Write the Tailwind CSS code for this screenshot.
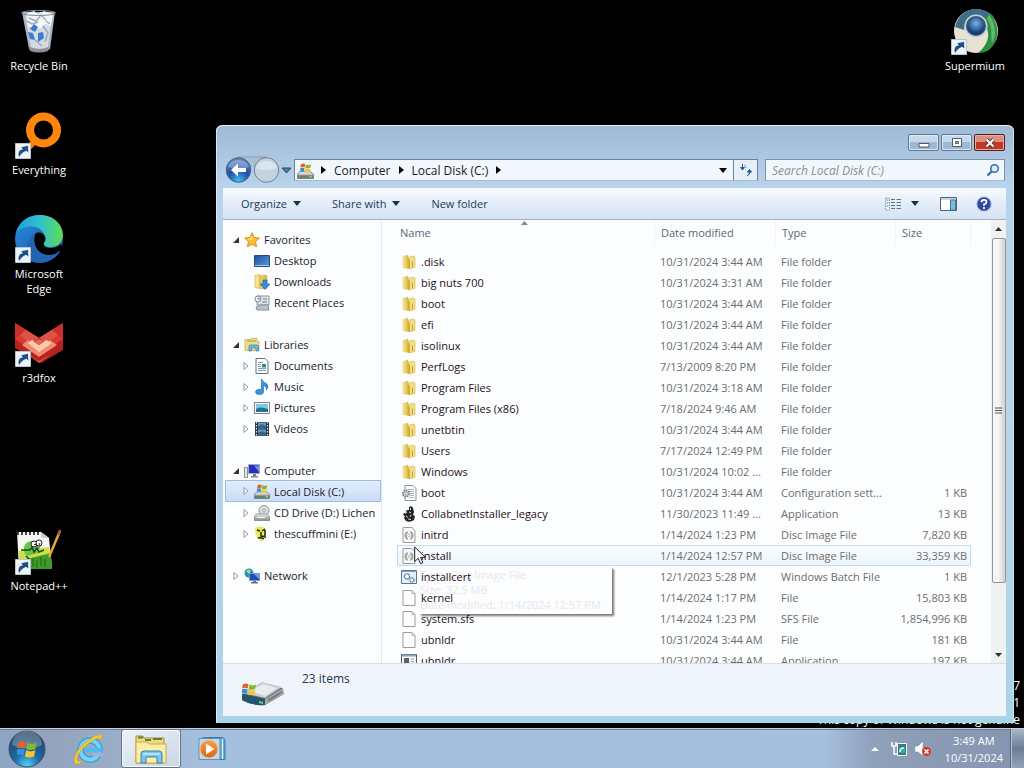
<!DOCTYPE html>
<html lang="en">
<head>
    <meta charset="UTF-8">
    <meta name="viewport" content="width=device-width, initial-scale=1.0">
    <title>Local Disk (C:)</title>
    <script src="https://cdn.jsdelivr.net/npm/@tailwindcss/browser@4"></script>
</head>
<body class="h-screen flex flex-col overflow-hidden bg-black font-['Open_Sans','Noto_Sans',sans-serif] text-[11px] leading-[15px] text-[#1a1a2a] cursor-default">

    <!-- Icon sprite (zero size, since gradients are lost under display: none) -->
    <svg class="absolute size-0" xmlns="http://www.w3.org/2000/svg">
        <defs>
            <linearGradient id="gFolder" x1="0" x2="1"><stop offset="0" stop-color="#f9eda0"/><stop offset=".5" stop-color="#ecd265"/><stop offset="1" stop-color="#d9b93f"/></linearGradient>
            <linearGradient id="gGrey" x1="0" x2="0" y1="0" y2="1"><stop offset="0" stop-color="#eef0f1"/><stop offset="1" stop-color="#85898c"/></linearGradient>
            <linearGradient id="gBlue" x1="0" x2="1" y1="0" y2="1"><stop offset="0" stop-color="#1b4fa0"/><stop offset="1" stop-color="#5b9be0"/></linearGradient>
            <linearGradient id="gEdgeTop" x1="0" x2="1"><stop offset="0" stop-color="#1e9fd8"/><stop offset=".5" stop-color="#2fc0cf"/><stop offset="1" stop-color="#5fdc52"/></linearGradient>
            <linearGradient id="gEdgeLow" x1="0" x2="1" y1="0" y2="1"><stop offset="0" stop-color="#2a8ede"/><stop offset="1" stop-color="#14509c"/></linearGradient>
            <radialGradient id="gOrb" cx=".5" cy=".95" r=".9"><stop offset="0" stop-color="#4fd4f4"/><stop offset=".4" stop-color="#1c6ba8"/><stop offset="1" stop-color="#23415f"/></radialGradient>
            <radialGradient id="gBack" cx=".5" cy=".95" r=".9"><stop offset="0" stop-color="#48c3f2"/><stop offset=".5" stop-color="#1b4fa5"/><stop offset="1" stop-color="#5e85c0"/></radialGradient>
            <radialGradient id="gEye" cx=".5" cy=".35" r=".6"><stop offset="0" stop-color="#7ab4e6"/><stop offset="1" stop-color="#0d3570"/></radialGradient>
            <linearGradient id="gPlay" x1="0" x2="0" y1="0" y2="1"><stop offset="0" stop-color="#f7a04c"/><stop offset="1" stop-color="#dd6312"/></linearGradient>
        </defs>

        <symbol id="flag" viewBox="0 0 16 16">
            <path d="M1 3q3-2 6 0L6 7.500q-3-1.500-6 0z" fill="#e2622b"/>
            <path d="M8 3.300q3 1.700 7 0L14 8q-4 1.500-7 0z" fill="#86b82c"/>
            <path d="M0 8.500q3-1.500 6 0L5 13q-3-1.500-6 0z" fill="#3a8fd6"/>
            <path d="M7 9q3 1.700 7 0l-1 4.700q-4 1.500-7 0z" fill="#f7c531"/>
        </symbol>
        <symbol id="shortcut" viewBox="0 0 16 16">
            <path d="M.5.500h15v15H.500z" fill="#eef3f8" stroke="#b9c4d0"/>
            <path d="M4 14C2.500 9 5 6.500 8 6.300L6.300 4.200 13 2.800l.3 6.600-2.100-1.600C8 9 6.300 10.500 4 14z" fill="#1d4f8c"/>
        </symbol>
        <symbol id="folder" viewBox="0 0 16 16">
            <path d="M2 2.500 7 1v13.500l-5-1z" fill="url(#gFolder)" stroke="#d8c060" stroke-width=".5"/>
            <path d="M7 3.500 12 2l2 1v10.500L8 15z" fill="#f2df84" stroke="#c9a93a" stroke-width=".5"/>
            <path d="M7 4 9 6v9l-2-.5z" fill="#d0ae3c"/>
            <path d="M11.500 7.500v5.500" stroke="#c49d2c"/>
        </symbol>
        <symbol id="file" viewBox="0 0 16 16">
            <path d="M2 .5h9L14 3.500v12H2z" fill="#fdfdfd" stroke="#9c9c9c"/>
            <path d="M11 .5v3h3" fill="none" stroke="#b5b5b5"/>
        </symbol>
        <symbol id="disc" viewBox="0 0 16 16">
            <path d="M2 .5h9L14 3.500v12H2z" fill="#f8f8f8" stroke="#9c9c9c"/>
            <circle cx="8" cy="8.500" r="3.500" fill="none" stroke="#9a9fa1" stroke-width="2"/>
            <path d="M8 4v3M8 10v3.500" stroke="#f8f8f8" stroke-width="2.500"/>
            <circle cx="8" cy="8.500" r="1.200" fill="#fff" stroke="#a0a0a0" stroke-width=".7"/>
        </symbol>
        <symbol id="config" viewBox="0 0 16 16">
            <path d="M4 .5h8L15 3.500v12H4z" fill="#fafafa" stroke="#8f959a"/>
            <path d="M7 4.500h6M7 6.500h6M9 8.500h4M9 10.500h4M8 12.500h5" stroke="#a9b4be"/>
            <circle cx="5" cy="8.500" r="3.300" fill="#c2cad0" stroke="#6c7880" stroke-width="1.500" stroke-dasharray="1.500 1"/>
            <circle cx="5" cy="8.500" r="1.200" fill="#fff" stroke="#6c7880" stroke-width=".5"/>
        </symbol>
        <symbol id="java" viewBox="0 0 16 16">
            <path d="M8 1q3-2 4 1l1 4-1 3 2 1-1 4q-4 3-8 1l-2-3 1-2-2-1 1-2 2 .5L6 6 4.500 4.500 8 4z" fill="#222426"/>
            <path d="M9.500 2v2M8 6l2 1M5 10l2 1.500M10 9l-1 2M7 13l3 .5" stroke="#d9dcdd" fill="none"/>
        </symbol>
        <symbol id="batch" viewBox="0 0 16 16">
            <path d="M.5 1.500h15v13H.500z" fill="#e4eef7" stroke="#54789b"/>
            <path d="M1 2.500h14" stroke="#7ca4c9"/>
            <circle cx="6" cy="7.500" r="2.600" fill="#fff" stroke="#53718d" stroke-width="1.300" stroke-dasharray="1.600 .6"/>
            <circle cx="11" cy="11" r="2.100" fill="#fff" stroke="#53718d" stroke-width="1.200" stroke-dasharray="1.300 .5"/>
        </symbol>
        <symbol id="app" viewBox="0 0 16 16">
            <path d="M.5 1.500h15v13H.500z" fill="#f6f8f9" stroke="#54626c"/>
            <path d="M1 2.500h14" stroke="#8ba4b5" stroke-width="2"/>
            <path d="M3 5h5v7H3z" fill="#4b6373"/>
            <path d="M10 6h3M10 8.500h3M10 11h3" stroke="#8f9ba3"/>
        </symbol>
        <symbol id="star" viewBox="0 0 16 16">
            <path d="m8 .7 2.200 4.800 5.200.6-3.900 3.500 1.100 5.200L8 12.200l-4.600 2.600 1.100-5.200L.6 6.100l5.200-.6z" fill="#fbc02f" stroke="#db8f25"/>
            <path d="M8 3 6.500 6.500 3 7l5 1z" fill="#fde89b"/>
        </symbol>
        <symbol id="desktop" viewBox="0 0 16 16">
            <path d="M.5 2.500h15v11H.500z" fill="url(#gBlue)" stroke="#2a4a74"/>
            <path d="M1 12.500h14" stroke="#a9c8ea"/>
        </symbol>
        <symbol id="downloads" viewBox="0 0 16 16">
            <path d="M1 1.500 6 .5v14l-5-1zM6 2l5-1 2 1v12l-6 1z" fill="url(#gFolder)" stroke="#cda93c" stroke-width=".6"/>
            <path d="M9 6h4v4h3l-5 5.500L6 10h3z" fill="#3590d8" stroke="#1d5d9c" stroke-width=".6"/>
        </symbol>
        <symbol id="recent" viewBox="0 0 16 16">
            <path d="M3 1h12v9H3z" fill="#dfe5e9" stroke="#87929a"/>
            <path d="M2 12q4-3 12-2l1 5H3z" fill="#bac4cb" stroke="#87929a"/>
            <circle cx="4" cy="4" r="3" fill="#eef3f5" stroke="#7d8c96"/>
            <path d="M4 2.500V4h2M9 4h4M8 7h5" stroke="#6a7780" fill="none"/>
        </symbol>
        <symbol id="libraries" viewBox="0 0 16 16">
            <path d="M1 2.500h5l1-1h6v3h2v9H1z" fill="#f2dd86" stroke="#c7a848" stroke-width=".7"/>
            <path d="M3 4h9" stroke="#77a357"/>
            <path d="M5 14V9.500Q5 8 6.500 8H13q1.500 0 1.500 1.500V14H12v-3H7.500v3z" fill="#6dbbe5" stroke="#3379ac" stroke-width=".7"/>
        </symbol>
        <symbol id="documents" viewBox="0 0 16 16">
            <path d="M2 .5h9L14 3.500v12H2z" fill="#fff" stroke="#64727d"/>
            <path d="M4 4.500h5M4 6.500h3M4 8.500h3M4 10.500h8M4 12.500h8" stroke="#7d9bb3"/>
            <path d="M8 6h4v3.500H8z" fill="#348c7e"/>
        </symbol>
        <symbol id="music" viewBox="0 0 16 16">
            <path d="M7.500 0Q9 3.500 13 5q2 3-.5 6 .5-3.500-3-4.500V13q0 2.500-4 2.500T1.500 13t4-2.700l2 .3z" fill="#3298dd" stroke="#1b64a9" stroke-width=".6"/>
        </symbol>
        <symbol id="pictures" viewBox="0 0 16 16">
            <path d="M.5 2.500h15v11H.500z" fill="#fff" stroke="#75838e"/>
            <path d="M2 4h12v8H2z" fill="#7cc5ed"/>
            <path d="M2 9q4-3 12 0v3H2z" fill="#28708c"/>
        </symbol>
        <symbol id="videos" viewBox="0 0 16 16">
            <path d="M1 1h14v14H1z" fill="#27323a"/>
            <path d="M4 1.500h8v6H4zM4 8.500h8v6H4z" fill="#5b9ccc"/>
            <path d="M4 5l4-2 4 2v2.500H4zM4 12l4-2 4 2v2.500H4z" fill="#356489"/>
            <path d="M2.500 1v14M13.500 1v14" stroke="#e1e6ea" stroke-width="1.200" stroke-dasharray="1.500 1.500"/>
        </symbol>
        <symbol id="computer" viewBox="0 0 16 16">
            <path d="M.5 4.500h3v10h-3z" fill="#e5e8e9" stroke="#878d91"/>
            <path d="M4.500 1.500h11v9h-11z" fill="#2230c4" stroke="#a3abb3"/>
            <path d="M10 2.500h5V9z" fill="#708be9"/>
            <path d="M9 11h3v2h2v1.500H7V13h2z" fill="#7d868d"/>
        </symbol>
        <symbol id="drive" viewBox="0 0 16 16">
            <path d="M2.500 9h10l3 2.500v4H.500v-4z" fill="url(#gGrey)" stroke="#5f6a68" stroke-width=".7"/>
            <path d="M1 12.500h14v2.500H1z" fill="#6c7f72"/>
            <path d="M11.500 13.800h2.500" stroke="#7dde5c" stroke-width="1.500"/>
            <use href="#flag" x="3" y="0" width="11" height="11"/>
        </symbol>
        <symbol id="cd" viewBox="0 0 16 16">
            <circle cx="10" cy="5.500" r="5" fill="#dde0e1" stroke="#8e9497"/>
            <circle cx="10" cy="5.500" r="1.500" fill="#fff" stroke="#8e9497"/>
            <path d="M2.500 9h10l3 2.500v4H.500v-4z" fill="url(#gGrey)" stroke="#73797c" stroke-width=".7"/>
            <path d="M3 12.500h8" stroke="#f7f7f7"/>
        </symbol>
        <symbol id="face" viewBox="0 0 16 16">
            <path d="M1 2q5-3 10 0l1 7-4 7Q1 12 1 2z" fill="#e8ea54"/>
            <path d="M3 4l3 1M8 5l3-2M7 6v4l3 .5M4 12q3-1 6 1M11 4v8" stroke="#20231a" stroke-width="1.500" fill="none"/>
        </symbol>
        <symbol id="network" viewBox="0 0 16 16">
            <circle cx="5" cy="5" r="4.500" fill="#2a93a8"/>
            <path d="M2 3q3-3 5 0L5 6z" fill="#93dbb6"/>
            <path d="M5.500 5.500h10v7h-10z" fill="#1d4dc0" stroke="#7f96ad"/>
            <path d="M10 6h5v5z" fill="#6c9df0"/>
            <path d="M9 13h3v1h2v1.500H7V14h2z" fill="#68747e"/>
        </symbol>
    </svg>

    <main class="relative flex-1 min-h-0">
        <!-- Desktop icons -->
        <div class="absolute left-0 top-0 w-[78px] grid auto-rows-[104px] text-white text-center">
            <a class="row-start-1 flex flex-col items-center pt-[7px] gap-[3px]">
                <svg class="size-12" viewBox="0 0 48 48">
                    <path d="M7 5h33l-5 37q-10 6-21 0z" fill="#aab4bf"/>
                    <path d="M10 8h27l-4 32q-9 4-17 0z" fill="#d3dae1"/>
                    <path d="m12 6 7-2 4 3 6-3 9 3-2 12-6-2-5 5-6-3-6 1z" fill="#f4f6f8"/>
                    <path d="m14 11 7 3 5-6 5 5M28 19l5 7-3 9M20 33l7 6M31 14l4 3M12 14l5 3 6-2" stroke="#9dabb9" stroke-width="1.500" fill="none"/>
                    <path d="m15 22 4-5 4 3-3 5zM13 25l5 1 2 7-5-1zM23 26l5-1 1 6-6 4z" fill="#3d7bd3"/>
                    <ellipse cx="23.500" cy="6" rx="17" ry="2.500" fill="none" stroke="#7f8b97"/>
                    <path d="M14 40q10 4 20 0l-1 4q-9 3-18 0z" fill="#8d8f95"/>
                </svg>
                <span>Recycle Bin</span>
            </a>
            <a class="row-start-2 flex flex-col items-center pt-[7px] gap-[3px]">
                <svg class="size-12" viewBox="0 0 48 48">
                    <path d="M21 29 10 40" stroke="#ff7d05" stroke-width="6"/>
                    <circle cx="28.500" cy="19" r="13.500" fill="none" stroke="#ff860d" stroke-width="8"/>
                    <use href="#shortcut" x="0" y="32" width="16" height="16"/>
                </svg>
                <span>Everything</span>
            </a>
            <a class="row-start-3 flex flex-col items-center pt-[7px] gap-[3px]">
                <svg class="size-12" viewBox="0 0 48 48">
                    <circle cx="24" cy="24" r="24" fill="url(#gEdgeLow)"/>
                    <path d="M1 18C4 6 14 0 25 0c14 0 23 10 23 20 0 8-6 12-12 12-6 0-8-2-7-4 2-2 2-5 1-7C26 9 9 9 1 18z" fill="url(#gEdgeTop)"/>
                    <path d="M20 19c4-3 9-1 10 3 1 3-1 5-1 6-1 3 2 5 7 5 4 0 8-2 10-4l1 3-3 6c-3 2-8 3-12 2-8-1-15-9-12-21z" fill="#000"/>
                    <path d="M20 19c-4 11 3 21 14 21 5 0 8-2 10-4 1 0 1 1 0 2-5 7-13 10-20 10C10 46 8 26 20 19z" fill="#2264b1"/>
                    <use href="#shortcut" x="0" y="32" width="16" height="16"/>
                </svg>
                <span>Microsoft<br>Edge</span>
            </a>
            <a class="row-start-4 flex flex-col items-center pt-[7px] gap-[3px]">
                <svg class="size-12" viewBox="0 0 48 48">
                    <path d="M0 4l24 15L48 4v27L26 44 0 29z" fill="#b5231f"/>
                    <path d="M0 4l24 15-12 9L0 20zM48 4 24 19l12 9 12-8z" fill="#d93a31"/>
                    <path d="M0 4l11 7-11 9zM48 4l-11 7 11 9z" fill="#c9302a"/>
                    <path d="m11 11 13 8-8 6-11-9zM37 11l-13 8 8 6 11-9z" fill="#de5147"/>
                    <path d="m12 28 12-9 12 9-12 9z" fill="#b52a26"/>
                    <path d="m7 26 6-5 11 7 11-7 7 5-18 12z" fill="#ee8c72"/>
                    <path d="m13 24 4-3 7 5 7-5 6 3-13 9z" fill="#ffc9ab"/>
                    <path d="m19 23 5-3 5 3-5 3z" fill="#e0675a"/>
                    <path d="m12 35 12 7 12-7-12 9z" fill="#d65548"/>
                    <use href="#shortcut" x="0" y="32" width="16" height="16"/>
                </svg>
                <span>r3dfox</span>
            </a>
            <a class="row-start-6 flex flex-col items-center pt-[7px] gap-[3px]">
                <svg class="size-12" viewBox="0 0 48 48">
                    <path d="M2 5h24l8 6 3 31H4z" fill="#f7f8f4"/>
                    <path d="m3 24 31-4 3 22H5z" fill="#cde04a"/>
                    <path d="m4 34 32-8 1 16H5z" fill="#419a2c"/>
                    <path d="M3 5v3M7 5v3M11 5v3M15 5v3M19 5v3M23 5v3" stroke="#444" stroke-width="2"/>
                    <path d="M26 5v6h8z" fill="#c9cdd0"/>
                    <path d="M9 20q2-7 10-6l7 4-3 8-10 3q-5-2-4-9z" fill="#65c44a"/>
                    <path d="M6 23h9l2-3 2 5 3-4 2 4 5-2M11 29l4 4" stroke="#204615" stroke-width="1.500" fill="none"/>
                    <circle cx="19" cy="17" r="3" fill="#fff" stroke="#222"/><circle cx="24" cy="16" r="3" fill="#fff" stroke="#222"/>
                    <circle cx="20" cy="17.500" r=".8"/><circle cx="24.500" cy="17" r=".8"/>
                    <path d="M18 40v-9M22 41v-8M26 39v-9M30 40v-8" stroke="#1d6715"/>
                    <path d="M45 4 34 30" stroke="#e7a83b" stroke-width="2.500"/>
                    <path d="m45 3-2 5" stroke="#b24d3b" stroke-width="2.500"/>
                    <use href="#shortcut" x="0" y="32" width="16" height="16"/>
                </svg>
                <span>Notepad++</span>
            </a>
        </div>
        <a class="absolute right-0 top-0 w-[98px] flex flex-col items-center pt-[7px] gap-[3px] text-white">
            <svg class="size-12" viewBox="0 0 48 48">
                <circle cx="25" cy="24" r="22" fill="#e8e2d2"/>
                <path d="M4 20C7 8 16 2 25 2c8 0 15 4 18 8l-11 3-18 4-1 6z" fill="#3d6d88"/>
                <path d="M38 6c10 9 12 25 1 36-3 3-9 4-12 4 7-6 11-13 10-20-1-7-3-9-6-12z" fill="#2c8f42"/>
                <path d="M38 8c7 9 8 20 3 28-2-7 2-15-5-24z" fill="#5fbb68"/>
                <circle cx="25" cy="19" r="11.500" fill="#c5d2da"/>
                <circle cx="25" cy="19" r="10" fill="#31526b"/>
                <circle cx="25" cy="19" r="8.500" fill="url(#gEye)"/>
                <use href="#shortcut" x="0" y="32" width="16" height="16"/>
            </svg>
            <span>Supermium</span>
        </a>

        <!-- Build watermark -->
        <p class="absolute right-1 bottom-0 text-right text-white text-[12px] leading-[17px]">Windows 7<br>Build 7601<br>This copy of Windows is not genuine</p>

        <!-- Explorer window -->
        <section class="absolute left-[216px] right-2.5 top-[125px] bottom-[5px] flex flex-col pl-[7px] pr-2 pb-[7px] rounded-t-md border-t border-[#e6f2fb] bg-[linear-gradient(#9fbad5,#b9d3ec_60px,#bcd3e9_50%,#abd3e8)] shadow-[inset_1px_0_#dde9f3,inset_-1px_0_#b5eef7,inset_0_-1px_#9be3ea]">
            <div class="h-8 flex justify-end gap-0.5 pt-2 pr-px">
                <button aria-label="Minimize" class="w-[31px] h-[17px] flex items-center justify-center rounded-[2px] border border-[#5f7891] bg-linear-to-b from-[#c7d9ea] from-50% to-[#9fb9d2] to-50% shadow-[inset_0_0_0_1px_#dbe8f4]">
                    <svg class="w-3 h-3" viewBox="0 0 12 12"><path d="M1 6.500h10v3.500H1z" fill="#fff" stroke="#4c5b6b"/></svg>
                </button>
                <button aria-label="Maximize" class="w-[31px] h-[17px] flex items-center justify-center rounded-[2px] border border-[#5f7891] bg-linear-to-b from-[#c7d9ea] from-50% to-[#9fb9d2] to-50% shadow-[inset_0_0_0_1px_#dbe8f4]">
                    <svg class="w-3 h-3" viewBox="0 0 12 12"><path d="M1.500 1.500h9v8h-9z" fill="#fff" stroke="#4c5b6b"/><path d="M4.500 4.500h3v2h-3z" fill="#9fb9d2" stroke="#4c5b6b"/></svg>
                </button>
                <button aria-label="Close" class="w-[31px] h-[17px] flex items-center justify-center rounded-[2px] border border-[#571b1b] bg-linear-to-b from-[#dc9080] from-50% to-[#bf3a24] to-50% shadow-[inset_0_0_0_1px_#e9aea2]">
                    <svg class="w-3 h-3" viewBox="0 0 12 12"><path d="m2.500 2.500 7 7m0-7-7 7" stroke="#5c2c2c" stroke-width="4"/><path d="m2.500 2.500 7 7m0-7-7 7" stroke="#fff" stroke-width="2.200"/></svg>
                </button>
            </div>

            <div class="h-[30px] flex items-start pt-px pr-px">
                <svg class="w-[71px] h-7 -mt-1 shrink-0" viewBox="0 0 71 28">
                    <path d="M15 2h29v10H15z" fill="#a9bfd5"/>
                    <path d="M15 2h29" stroke="#8ba0b5"/>
                    <circle cx="15.500" cy="15" r="12.300" fill="url(#gBack)" stroke="#45617f"/>
                    <path d="M5 12a11 10 0 0 1 21 0q-10 4-21 0z" fill="#fff" opacity=".3"/>
                    <path d="m8 15 7-6.500V13h8v4h-8v4.500z" fill="#fff"/>
                    <circle cx="43.500" cy="15" r="12.300" fill="#c5d3e0" stroke="#6e8296"/>
                    <path d="M33 13a11 10 0 0 1 21 0q-10 4-21 0z" fill="#dbe5ee"/>
                    <path d="M59 13h9l-4.500 5z" fill="#4a7fa5" stroke="#28465f"/>
                </svg>
                <div class="flex-1 h-[22px] flex items-center bg-[#f1f7fc] border border-[#6f8397] border-b-[#a9bccd]">
                    <svg class="size-[17px] ml-0.5" viewBox="0 0 16 16"><use href="#drive"/></svg>
                    <svg class="w-[5px] h-2 ml-[7px]" viewBox="0 0 5 8"><path d="m0 0 5 4-5 4z"/></svg>
                    <button class="ml-2 text-[12px]">Computer</button>
                    <svg class="w-[5px] h-2 ml-2" viewBox="0 0 5 8"><path d="m0 0 5 4-5 4z"/></svg>
                    <button class="ml-2 text-[12px]">Local Disk (C:)</button>
                    <svg class="w-[5px] h-2 ml-2" viewBox="0 0 5 8"><path d="m0 0 5 4-5 4z"/></svg>
                    <button aria-label="Previous locations" class="ml-auto mr-1.5">
                        <svg class="w-2 h-[5px]" viewBox="0 0 8 5"><path d="M0 0h8L4 5z"/></svg>
                    </button>
                </div>
                <button aria-label="Refresh" class="w-6 h-[22px] flex items-center justify-center bg-[#e6f0f9] border border-l-0 border-[#6f8397] border-b-[#a9bccd]">
                    <svg class="size-3.5" viewBox="0 0 14 14"><path d="M3.500 1v5M1.500 4.500 3.500 7l2-2.500z" fill="#2d5ba0" stroke="#2d5ba0"/><path d="M5 2q2 0 2 3M8.500 9l2-2.500 2 2.500z" fill="none" stroke="#7fa0cc"/><path d="M8.500 9l2-2.500 2 2.500zM10.500 9v2L8 13" fill="#2d5ba0" stroke="#2d5ba0"/></svg>
                </button>
                <label class="w-60 h-[22px] ml-[7px] flex items-center bg-[#f1f7fc] border border-[#7f93a7] border-b-[#a9bccd]">
                    <input type="text" aria-label="Search" placeholder="Search Local Disk (C:)" class="flex-1 min-w-0 pl-1.5 bg-transparent outline-none italic text-[12px] placeholder:text-[#85909a]">
                    <svg class="size-3.5 mr-1" viewBox="0 0 14 14"><path d="M6 8 1.500 12.500" stroke="#34609c" stroke-width="2"/><circle cx="8.500" cy="5.500" r="3.800" fill="#dcecfa" stroke="#3c6ea8" stroke-width="1.600"/></svg>
                </label>
            </div>

            <div class="h-8 shrink-0 flex items-center pl-[18px] pr-3.5 text-[#1e395b] bg-linear-to-b from-[#f8fbfe] via-[#e3edf8] to-[#d6e3f2] border-b border-[#9fb0c5]">
                <button class="flex items-center gap-1.5">Organize <svg class="w-2 h-[5px]" viewBox="0 0 8 5"><path d="M0 0h8L4 5z" fill="#1e2f48"/></svg></button>
                <button class="flex items-center gap-1.5 ml-[31px]">Share with <svg class="w-2 h-[5px]" viewBox="0 0 8 5"><path d="M0 0h8L4 5z" fill="#1e2f48"/></svg></button>
                <button class="ml-[31px]">New folder</button>
                <button aria-label="Change view" class="ml-auto flex items-center gap-2.5">
                    <svg class="w-4 h-3.5" viewBox="0 0 16 14"><path d="M.5 1v12h4V1z" fill="#f7fafc" stroke="#8295a7" stroke-dasharray="1.500 1"/><path d="M6 2.500h4M6 5.500h4M6 8.500h4M6 11.500h4M11.500 2.500H16M11.500 5.500H16M11.500 8.500H16M11.500 11.500H16" stroke="#5d7389"/><path d="M1.500 3h2M1.500 6h2M1.500 9h2" stroke="#49729b"/></svg>
                    <svg class="w-2 h-[5px]" viewBox="0 0 8 5"><path d="M0 0h8L4 5z" fill="#1e2f48"/></svg>
                </button>
                <button aria-label="Show the preview pane" class="ml-[21px]">
                    <svg class="w-[17px] h-3.5" viewBox="0 0 17 14"><path d="M.5.500h16v13H.500z" fill="#fff" stroke="#45617e"/><path d="M1 2h15" stroke="#8fa9c2"/><path d="M10.500 3h5v10h-5z" fill="#79bbe3" stroke="#50758f"/></svg>
                </button>
                <button aria-label="Get help" class="ml-[19px]">
                    <svg class="size-4" viewBox="0 0 16 16"><circle cx="8" cy="8" r="7" fill="#2c4ba0" stroke="#8b9bc0"/><path d="M5.500 6.200Q5.500 3.800 8 3.800t2.500 2.100Q10.500 7.500 8 8.400v1.400M8 11v2" fill="none" stroke="#fff" stroke-width="1.800"/></svg>
                </button>
            </div>

            <div class="flex-1 min-h-0 flex bg-[#fcfdfe]">
                <nav class="w-[159px] shrink-0 overflow-hidden border-r border-[#e3e9f0] pt-[9px] pl-0.5">
                    <ul id="tree"></ul>
                </nav>

                <div class="relative flex-1 min-w-0 overflow-hidden pl-[15px] pr-5">
                    <svg class="absolute left-[139px] top-px w-[7px] h-1" viewBox="0 0 7 4"><path d="M0 4h7L3.500 0z" fill="#77889a"/></svg>
                    <div class="absolute left-[37px] top-[347px] w-[193px] h-[47px] pl-px whitespace-nowrap text-[#e6e8ea] shadow-[2px_2px_2px_#777]">Type: Disc Image File<br>Size: 32.5 MB<br>Date modified: 1/14/2024 12:57 PM</div>
                    <table class="relative w-full table-fixed border-collapse whitespace-nowrap text-[#6d6d6d]">
                        <colgroup><col><col class="w-[121px]"><col class="w-[120px]"><col class="w-[75px]"></colgroup>
                        <thead>
                            <tr class="text-left text-[#5a6778]">
                                <th class="h-[31px] p-0 align-top font-normal"><div class="h-[25px] flex items-center pl-[3px] border-r border-[#f2f5f8]">Name</div></th>
                                <th class="h-[31px] p-0 align-top font-normal"><div class="h-[25px] flex items-center pl-1.5 border-r border-[#f2f5f8]">Date modified</div></th>
                                <th class="h-[31px] p-0 align-top font-normal"><div class="h-[25px] flex items-center pl-1.5 border-r border-[#f2f5f8]">Type</div></th>
                                <th class="h-[31px] p-0 align-top font-normal"><div class="h-[25px] flex items-center pl-1.5 border-r border-[#f2f5f8]">Size</div></th>
                            </tr>
                        </thead>
                        <tbody id="files"></tbody>
                    </table>
                    <svg class="absolute left-8 top-[326px] w-3 h-[19px]" viewBox="0 0 12 19"><path d="M.7 1v14.500l3.500-3.300 2.300 5.500 2.300-1-2.300-5.300h4.800z" fill="#fff" stroke="#222"/></svg>
                </div>

                <div class="w-[15px] shrink-0 flex flex-col items-center bg-[#f0f1f3]">
                    <svg class="w-[7px] h-1 my-[7px]" viewBox="0 0 7 4"><path d="M0 4h7L3.500 0z" fill="#333"/></svg>
                    <div class="w-3.5 basis-[345px] flex items-center justify-center rounded-[2px] border border-[#979797] bg-linear-to-r from-[#f5f5f6] from-45% to-[#cfd0d6]">
                        <svg class="w-[7px] h-2" viewBox="0 0 7 8"><path d="M0 1h7M0 3.500h7M0 6h7" stroke="#555"/></svg>
                    </div>
                    <svg class="w-[7px] h-1 mt-auto mb-1.5" viewBox="0 0 7 4"><path d="M0 0h7L3.500 4z" fill="#333"/></svg>
                </div>
            </div>

            <div class="h-[53px] shrink-0 flex items-start pl-[17px] bg-[#f0f5fb] border-t border-[#d5dfea]">
                <svg class="w-[46px] h-7 mt-4" viewBox="0 0 46 28">
                    <path d="M2 14 22 3l20 5 2 6-19 11Q12 26 2 20z" fill="#62696c"/>
                    <path d="M2 13 22 2l20 5-17 11z" fill="#c9cdcf"/>
                    <path d="m10 11 13-7 14 4-12 8z" fill="#e9ebec"/>
                    <path d="m2 14 23 5v6Q12 26 2 20z" fill="#25546f"/>
                    <path d="m25 19 18-11 1 6-19 11z" fill="#a4a9ab"/>
                    <path d="m28 19 14-8v2l-14 9z" fill="#777d80"/>
                    <path d="m19 21 4 1v2l-4-1z" fill="#6ade54"/>
                    <use href="#flag" x="2" y="1" width="15" height="16"/>
                </svg>
                <span class="ml-4 mt-[7px] text-[12px] text-[#27374f]">23 items</span>
            </div>
        </section>
    </main>

    <!-- Taskbar -->
    <footer class="h-10 shrink-0 flex items-stretch border-t border-[#c5cede] bg-[linear-gradient(90deg,#8fa5c4,#94a3bd_60px,#a4bfdd_200px,#a5c0de_calc(100%-200px),#8fa0bb_calc(100%-150px),#8594ae)] shadow-[inset_0_1px_#6e7f99]">
        <button aria-label="Start" class="w-[54px] flex items-center justify-center">
            <svg class="size-[38px]" viewBox="0 0 38 38">
                <circle cx="19" cy="19" r="18" fill="url(#gOrb)" stroke="#3d556d"/>
                <path d="M4 15a15 14 0 0 1 30 0q-15 7-30 0z" fill="#fff" opacity=".25"/>
                <use href="#flag" x="9" y="8" width="21" height="22"/>
            </svg>
        </button>
        <button aria-label="Internet Explorer" class="w-[67px] flex items-center justify-center">
            <svg class="size-8" viewBox="0 0 32 32">
                <circle cx="18" cy="17" r="9.500" fill="none" stroke="#2c9ddb" stroke-width="6.500"/>
                <circle cx="18" cy="17" r="9.500" fill="none" stroke="#74d3f7" stroke-width="4"/>
                <path d="M13 17h17" stroke="#4dbaf0" stroke-width="4.500"/>
                <path d="M21 19.500h10v4H20z" fill="#9fb4d0"/>
                <path d="M4 31C-1 28 4 17 14 9S30 0 30 4c0 1-1 3-2 4 1-4-4-3-12 3S3 26 6 28q2 1 6-1-5 5-8 4z" fill="#f2c936" stroke="#c6992a" stroke-width=".5"/>
            </svg>
        </button>
        <button aria-label="Windows Explorer" class="w-[60px] flex items-center justify-center rounded-[3px] border border-[#63738a] bg-linear-to-br from-[#edf2f8] to-[#c8d6e6] shadow-[inset_0_0_0_1px_#f7fafd]">
            <svg class="w-[34px] h-[30px]" viewBox="0 0 34 30">
                <path d="M2 2h7l1 2h20v25H2z" fill="#f2d975" stroke="#af8e35"/>
                <path d="M4 3.500h5M11 6h6M19 5h9" stroke="#5f7e46" stroke-width="2"/>
                <path d="M2 8h11l2 2h17v19H2z" fill="#fbeea6" stroke="#c9aa4e"/>
                <path d="M7 29v-9q0-3 3-3h15q3 0 3 3v9h-5v-6H12v6z" fill="#77c8ee" stroke="#3882ad"/>
                <path d="M9 20h17" stroke="#c2ecfc" stroke-width="1.500"/>
            </svg>
        </button>
        <button aria-label="Windows Media Player" class="w-[62px] flex items-center justify-center">
            <svg class="w-7 h-6" viewBox="0 0 28 24">
                <path d="M5 .5h20l2 2v20H5z" fill="#5ca7d6" stroke="#367caa"/>
                <path d="M24.500 2v20" stroke="#e7f6fd" stroke-width="1.200"/>
                <path d="M1 1.500h21v21H1z" fill="#b9dcf0" stroke="#5e91b3"/>
                <circle cx="11" cy="12" r="9" fill="url(#gPlay)" stroke="#f5c391"/>
                <path d="m8 6.500 8.500 5.500L8 17.500z" fill="#fff"/>
            </svg>
        </button>
        <div class="ml-auto flex items-center text-white">
            <svg class="w-2 h-1 mr-3" viewBox="0 0 8 4"><path d="M0 4h8L4 0z" fill="#fff"/></svg>
            <svg class="size-4 mr-2" viewBox="0 0 16 16"><path d="M1 1v4h4V1M3 5v8h4" fill="none" stroke="#fff" stroke-width="1.500"/><path d="M6.500 2.500h9v12h-9z" fill="#3e7880" stroke="#f5fafb"/><path d="M8 6h6v6H8z" fill="#2fae9b"/><path d="M9 11q0-4 4-4" stroke="#d8fff4" fill="none" stroke-width="1.500"/></svg>
            <svg class="size-4 mr-3.5" viewBox="0 0 16 16"><path d="M0 5h3l5-5v15l-5-4H0z" fill="#fff" stroke="#7b7e86" stroke-width=".5"/><circle cx="11.500" cy="10.500" r="4.500" fill="#d8362e"/><path d="m9.500 8.500 4 4m0-4-4 4" stroke="#fff" stroke-width="1.500"/></svg>
            <time class="text-center leading-[17px] mr-[7px]">3:49 AM<br>10/31/2024</time>
            <button aria-label="Show desktop" class="w-3.5 h-full border-l border-[#55647a] bg-linear-to-b from-[#a9b6c8] via-[#6d7d95] to-[#93a3b8] shadow-[inset_1px_0_#b9c6d8]"></button>
        </div>
    </footer>

    <script>
        // state: open, closed or none; null leaves a blank line between groups
        const tree = [
            ['star', 'Favorites', 0, 'open'],
            ['desktop', 'Desktop', 1, 'none'],
            ['downloads', 'Downloads', 1, 'none'],
            ['recent', 'Recent Places', 1, 'none'],
            null,
            ['libraries', 'Libraries', 0, 'open'],
            ['documents', 'Documents', 1, 'closed'],
            ['music', 'Music', 1, 'closed'],
            ['pictures', 'Pictures', 1, 'closed'],
            ['videos', 'Videos', 1, 'closed'],
            null,
            ['computer', 'Computer', 0, 'open'],
            ['drive', 'Local Disk (C:)', 1, 'closed', true],
            ['cd', 'CD Drive (D:) Lichen', 1, 'closed'],
            ['face', 'thescuffmini (E:)', 1, 'closed'],
            null,
            ['network', 'Network', 0, 'closed']
        ];
        const arrows = {
            open: '<path d="M7 1v6H1z" fill="#333"/>',
            closed: '<path d="M2 .5v7L6 4z" fill="#fff" stroke="#9a9a9a"/>',
            none: ''
        };
        document.getElementById('tree').innerHTML = tree.map(item => {
            if (!item) return '<li class="h-[21px]"></li>';
            const [icon, label, level, state, selected] = item;
            return `<li class="${selected ? 'border border-[#9dbce2] bg-linear-to-b from-[#e2edfb] to-[#c9dcf6] -mt-px h-[22px]' : 'border-x border-transparent h-[21px]'}">
                <a class="h-full flex items-center whitespace-nowrap ${level ? 'pl-4' : 'pl-1.5'}">
                    <svg class="size-2 shrink-0 mr-1" viewBox="0 0 8 8">${arrows[state]}</svg>
                    <svg class="size-4 shrink-0 mr-1"><use href="#${icon}"/></svg>
                    ${label}
                </a>
            </li>`;
        }).join('');

        const files = [
            ['folder', '.disk', '10/31/2024 3:44 AM', 'File folder', ''],
            ['folder', 'big nuts 700', '10/31/2024 3:31 AM', 'File folder', ''],
            ['folder', 'boot', '10/31/2024 3:44 AM', 'File folder', ''],
            ['folder', 'efi', '10/31/2024 3:44 AM', 'File folder', ''],
            ['folder', 'isolinux', '10/31/2024 3:44 AM', 'File folder', ''],
            ['folder', 'PerfLogs', '7/13/2009 8:20 PM', 'File folder', ''],
            ['folder', 'Program Files', '10/31/2024 3:18 AM', 'File folder', ''],
            ['folder', 'Program Files (x86)', '7/18/2024 9:46 AM', 'File folder', ''],
            ['folder', 'unetbtin', '10/31/2024 3:44 AM', 'File folder', ''],
            ['folder', 'Users', '7/17/2024 12:49 PM', 'File folder', ''],
            ['folder', 'Windows', '10/31/2024 10:02 ...', 'File folder', ''],
            ['config', 'boot', '10/31/2024 3:44 AM', 'Configuration sett...', '1 KB'],
            ['java', 'CollabnetInstaller_legacy', '11/30/2023 11:49 ...', 'Application', '13 KB'],
            ['disc', 'initrd', '1/14/2024 1:23 PM', 'Disc Image File', '7,820 KB'],
            ['disc', 'install', '1/14/2024 12:57 PM', 'Disc Image File', '33,359 KB', true],
            ['batch', 'installcert', '12/1/2023 5:28 PM', 'Windows Batch File', '1 KB'],
            ['file', 'kernel', '1/14/2024 1:17 PM', 'File', '15,803 KB'],
            ['file', 'system.sfs', '1/14/2024 1:23 PM', 'SFS File', '1,854,996 KB'],
            ['file', 'ubnldr', '10/31/2024 3:44 AM', 'File', '181 KB'],
            ['app', 'ubnldr', '10/31/2024 3:44 AM', 'Application', '197 KB']
        ];
        document.getElementById('files').innerHTML = files.map(([icon, name, date, type, size, hover]) => `
            <tr class="${hover ? 'outline outline-[#c3dcef] -outline-offset-1 bg-linear-to-b from-[#fafdff] to-[#ebf4fc]' : ''}">
                <td class="h-[21px] p-0 text-[#1c1020]"><div class="flex items-center gap-1 pl-1"><svg class="size-4"><use href="#${icon}"/></svg>${name}</div></td>
                <td class="h-[21px] p-0 pl-[5px]">${date}</td>
                <td class="h-[21px] p-0 pl-[5px]">${type}</td>
                <td class="h-[21px] p-0 pr-1"><div class="flex justify-end">${size}</div></td>
            </tr>`).join('');
    </script>
</body>
</html>
